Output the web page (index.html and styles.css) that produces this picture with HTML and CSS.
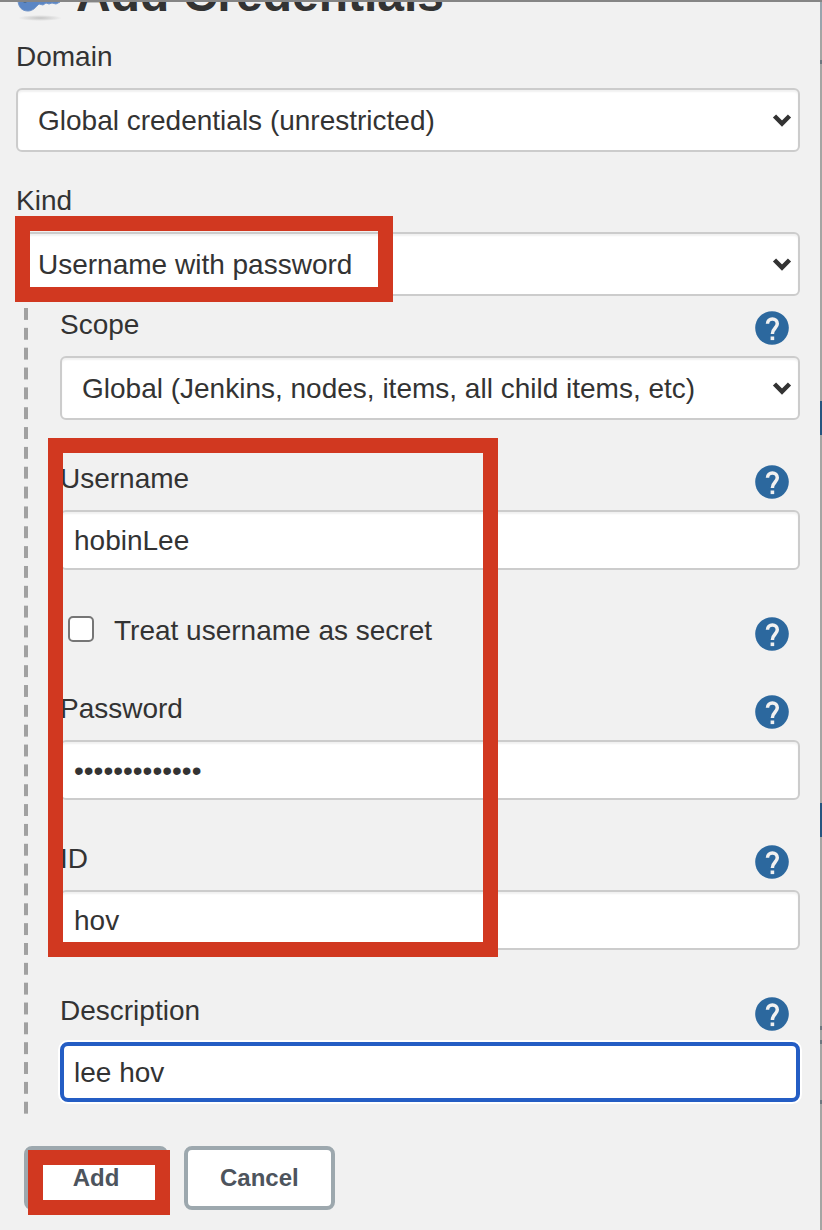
FILE: index.html
```html
<!DOCTYPE html>
<html lang="en">
<head>
<meta charset="utf-8">
<meta name="viewport" content="width=device-width, initial-scale=1">
<title>Add Credentials</title>
<link rel="stylesheet" href="styles.css">
</head>
<body>
<svg class="defs" aria-hidden="true">
  <symbol id="help" viewBox="0 0 40 40">
    <circle cx="20" cy="20" r="16.800" fill="#2c689e"/>
    <path fill="none" stroke="#f1f1f1" stroke-width="3.500" d="M15.500 15.800a4.900 4.900 0 0 1 9.800 0c0 4.200-4.900 4.400-4.900 10.200"/>
    <path fill="#f1f1f1" d="M18.600 28.500h3.600v3.600h-3.600z"/>
  </symbol>
  <symbol id="chevron" viewBox="0 0 20 14"><path fill="none" stroke="#333" stroke-width="4.500" d="M2.500 3L10 10.500L17.500 3"/></symbol>
</svg>
<main class="dialog">
  <header class="title">
    <svg class="title-icon" viewBox="0 0 48 48" aria-hidden="true">
      <defs><radialGradient id="shade"><stop offset="0" stop-color="#c4c4c4"/><stop offset="1" stop-color="#f1f1f1"/></radialGradient></defs>
      <ellipse cx="24" cy="44" rx="22" ry="3" fill="url(#shade)"/>
      <path fill="#5b86c4" stroke="#6f93c8" d="M2 26c0 7 4 11 10 11 5 0 8-4 11-7l4 1 3-2 3 1 3-1 4 1 4-2V20H3z"/>
      <circle cx="9" cy="27" r="2" fill="#496b91"/>
    </svg>
    <h1>Add Credentials</h1>
  </header>
  <form class="form">
    <div class="field">
      <div class="label-row"><label for="domain">Domain</label></div>
      <div class="select">
        <select id="domain"><option>Global credentials (unrestricted)</option></select>
        <svg class="chevron" aria-hidden="true"><use href="#chevron"/></svg>
      </div>
    </div>
    <div class="field kind">
      <div class="label-row"><label for="kind">Kind</label></div>
      <div class="select">
        <select id="kind"><option>Username with password</option></select>
        <svg class="chevron" aria-hidden="true"><use href="#chevron"/></svg>
        <span class="mark mark-kind"></span>
      </div>
    </div>
    <section class="nested">
      <div class="field">
        <div class="label-row"><label for="scope">Scope</label><button type="button" class="help" aria-label="Help for Scope"><svg><use href="#help"/></svg></button></div>
        <div class="select">
          <select id="scope"><option>Global (Jenkins, nodes, items, all child items, etc)</option></select>
          <svg class="chevron" aria-hidden="true"><use href="#chevron"/></svg>
        </div>
      </div>
      <div class="account">
        <div class="field loose">
          <div class="label-row"><label for="username">Username</label><button type="button" class="help" aria-label="Help for Username"><svg><use href="#help"/></svg></button></div>
          <input class="text" id="username" type="text" value="hobinLee">
        </div>
        <div class="check-row loose">
          <input class="check" id="secret" type="checkbox"><label for="secret">Treat username as secret</label><button type="button" class="help" aria-label="Help for Treat username as secret"><svg><use href="#help"/></svg></button>
        </div>
        <div class="field">
          <div class="label-row"><label for="password">Password</label><button type="button" class="help" aria-label="Help for Password"><svg><use href="#help"/></svg></button></div>
          <input class="text" id="password" type="password" value="abcdefghijklm">
        </div>
        <div class="field last">
          <div class="label-row"><label for="cred-id">ID</label><button type="button" class="help" aria-label="Help for ID"><svg><use href="#help"/></svg></button></div>
          <input class="text" id="cred-id" type="text" value="hov">
        </div>
        <span class="mark mark-account"></span>
      </div>
      <div class="field last">
        <div class="label-row"><label for="description">Description</label><button type="button" class="help" aria-label="Help for Description"><svg><use href="#help"/></svg></button></div>
        <input class="text active" id="description" type="text" value="lee hov">
      </div>
    </section>
    <div class="actions">
      <div class="action"><button type="submit" class="btn">Add</button><span class="mark mark-add"></span></div>
      <button type="button" class="btn">Cancel</button>
    </div>
  </form>
</main>
<div class="backdrop"></div>
</body>
</html>
```
FILE: styles.css
```css
* { box-sizing: border-box; }

body {
  margin: 0;
  min-height: 100vh;
  display: flex;
  border-top: 2px solid #858585;
  background: #f1f1f1;
  color: #333;
  font: 28px/34px "Liberation Sans", Arial, sans-serif;
}

.defs { position: absolute; width: 0; height: 0; }

.dialog { flex: 1; min-width: 0; padding: 0 20px 20px 16px; }

/* Sliver of the dimmed page behind the dialog */
.backdrop {
  width: 2px;
  background:
    linear-gradient(#25557f, #25557f) 0 399px / 2px 34px no-repeat,
    linear-gradient(#25557f, #25557f) 0 801px / 2px 34px no-repeat,
    linear-gradient(#6d7880, #6d7880) 0 58px / 2px 4px no-repeat,
    linear-gradient(#6d7880, #6d7880) 0 1024px / 2px 4px no-repeat,
    linear-gradient(#6d7880, #6d7880) 0 1038px / 2px 4px no-repeat,
    linear-gradient(#6d7880, #6d7880) 0 1098px / 2px 4px no-repeat,
    linear-gradient(#98a4ad, #98a4ad) 0 0 / 2px 28px no-repeat,
    #a5a5a3;
}

.title {
  height: 20px;
  display: flex;
  align-items: flex-end;
  gap: 12px;
  overflow: hidden;
}
.title-icon { width: 48px; height: 48px; flex: none; }
.title h1 { margin: 0; font-size: 48px; line-height: 54px; white-space: nowrap; }

.form { padding-top: 18px; }

.field { margin-bottom: 42px; }
.form > .field { margin-bottom: 32px; }
.form > .kind { margin-bottom: 12px; }
.field.loose, .check-row.loose, .account { margin-bottom: 44px; }
.field.last { margin-bottom: 0; }

.label-row {
  min-height: 48px;
  display: flex;
  justify-content: space-between;
  align-items: flex-start;
}

.help {
  width: 40px;
  height: 40px;
  margin-right: 8px;
  padding: 0;
  border: 0;
  background: none;
}
.help svg { display: block; width: 40px; height: 40px; }

.select { position: relative; }
select, .text {
  display: block;
  width: 100%;
  margin: 0;
  border: 2px solid #ccc;
  border-radius: 6px;
  background: #fff;
  box-shadow: inset 0 2px 2px rgba(0, 0, 0, 0.06);
  color: #333;
  font: inherit;
}
select { height: 64px; padding: 2px 48px 0 20px; appearance: none; }
.text { height: 60px; padding: 2px 12px 0; outline: 0; }
.text.active {
  padding: 2px 10px 0;
  border: 4px solid #245dc4;
  border-radius: 8px;
  box-shadow: 0 0 0 2px #fff;
}
.chevron {
  position: absolute;
  top: 25px;
  right: 8px;
  width: 20px;
  height: 14px;
  pointer-events: none;
}

/* The transparent bottom border completes the last dash period */
.nested {
  margin-left: 8px;
  padding: 0 0 12px 36px;
  border-bottom: 8px solid transparent;
  background: linear-gradient(#a1a1a1 60%, transparent 60%) 0 0 / 4px 20px no-repeat round border-box padding-box;
}

.account { position: relative; }

.check-row { height: 34px; display: flex; align-items: flex-start; }
.check-row label { flex: 1; margin-left: 20px; }
.check {
  width: 26px;
  height: 26px;
  margin: 2px 0 0 8px;
  appearance: none;
  border: 2px solid #767676;
  border-radius: 5px;
  background: #fff;
}

.actions { display: flex; gap: 16px; margin: 24px 0 0 8px; }
.action { position: relative; }
.btn {
  min-width: 144px;
  height: 64px;
  padding: 0 32px;
  border: 4px solid #9da8ae;
  border-radius: 8px;
  background: #fff;
  color: #4d545d;
  font: bold 24px/32px "Liberation Sans", Arial, sans-serif;
}

.mark {
  position: absolute;
  border: 15px solid #d13820;
  pointer-events: none;
}
.mark-kind { left: -1px; top: -16px; width: 378px; height: 86px; }
.mark-account { left: -12px; top: -24px; bottom: -7px; width: 450px; }
.mark-add { left: 4px; top: 4px; width: 142px; height: 65px; }
```
